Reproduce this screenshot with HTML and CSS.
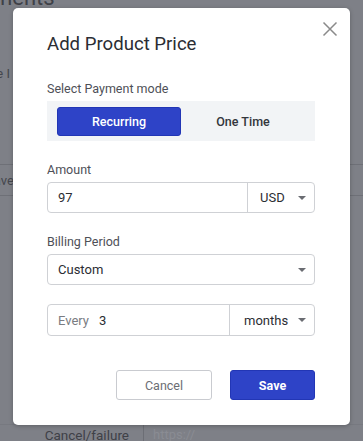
FILE: index.html
```html
<!DOCTYPE html>
<html>
<head>
<meta charset="utf-8">
<link rel="stylesheet" href="styles.css">
</head>
<body>
<div class="page">
  <div class="page-title">Payments</div>
  <div class="bg-row r1">Title I</div>
  <div class="bg-row r2">Ho</div>
  <div class="bg-row r3">Save</div>
  <div class="bg-foot">
    <span class="foot-label">Cancel/failure</span>
    <span class="foot-input">https://</span>
  </div>
</div>

<div class="modal">
  <button class="close" aria-label="Close">
    <svg width="16" height="16" viewBox="0 0 16 16"><path d="M1.5 1.5 L14.5 14.5 M14.5 1.5 L1.5 14.5" stroke="#8a8a8a" stroke-width="1.5" fill="none"/></svg>
  </button>
  <h2 class="title">Add Product Price</h2>

  <div class="label l-mode">Select Payment mode</div>
  <div class="toggle">
    <div class="opt active">Recurring</div>
    <div class="opt">One Time</div>
  </div>

  <div class="label l-amount">Amount</div>
  <div class="field-row">
    <div class="cell grow">97</div>
    <div class="cell select w-usd">USD<span class="caret"></span></div>
  </div>

  <div class="label l-billing">Billing Period</div>
  <div class="field-row">
    <div class="cell grow select">Custom<span class="caret"></span></div>
  </div>

  <div class="field-row every-row">
    <div class="cell grow every"><span class="muted">Every</span><span>3</span></div>
    <div class="cell select w-months">months<span class="caret"></span></div>
  </div>

  <div class="actions">
    <button class="btn cancel">Cancel</button>
    <button class="btn save">Save</button>
  </div>
</div>
</body>
</html>
```

FILE: styles.css
```css
* { box-sizing: border-box; }
html, body { margin: 0; padding: 0; }
body {
  width: 363px;
  height: 441px;
  overflow: hidden;
  background: #7e8087;
  font-family: Roboto, "Liberation Sans", sans-serif;
  position: relative;
}

/* dimmed page behind the modal */
.page {
  display: flow-root;
  color: #45474d;
  font-size: 13px;
  height: 441px;
  position: relative;
}
.page-title {
  font-size: 22px;
  margin-left: -43px;
  margin-top: -13px;
  line-height: 22px;
  color: #3f4147;
}
.bg-row {
  margin-left: -22px;
  width: 40px;
  line-height: 16px;
}
.r1 { margin-top: 57px; }
.r2 { margin-top: 28px; }
.r3 {
  margin-top: 38px;
  border-top: 1px solid #6e7077;
  border-bottom: 1px solid #6e7077;
  padding: 8px 0 6px;
  margin-left: 0;
  width: 363px;
  text-indent: -14px;
}
.bg-foot {
  position: absolute;
  left: 0;
  right: 0;
  top: 424px;
  height: 20px;
  display: flex;
  align-items: center;
  border-top: 1px solid #777980;
}
.foot-label {
  width: 144px;
  text-align: right;
  padding-right: 14px;
  color: #3f4147;
  font-size: 13.5px;
  border-right: 1px solid #6c6e75;
  line-height: 22px;
}
.foot-input { padding-left: 9px; color: #8a8c93; }

/* modal */
.modal {
  position: absolute;
  left: 13px;
  top: 8px;
  width: 337px;
  height: 417px;
  background: #fff;
  border-radius: 5px;
  box-shadow: 0 1px 4px rgba(0,0,0,0.25);
  padding: 0 35px 0 34px;
}
.close {
  position: absolute;
  right: 12px;
  top: 13px;
  width: 16px;
  height: 16px;
  padding: 0;
  border: 0;
  background: none;
  display: block;
}
.close svg { display: block; }
.title {
  margin: 25px 0 0;
  font-size: 18.6px;
  font-weight: 400;
  line-height: 22px;
  color: #2b2d33;
}
.label {
  font-size: 12.5px;
  line-height: 16px;
  color: #4e5057;
}
.l-mode { margin-top: 26px; }
.l-amount { margin-top: 21px; }
.l-billing { margin-top: 21px; }

.toggle {
  margin-top: 4px;
  height: 40px;
  background: #f2f4f6;
  padding: 6px 10px 5px;
  display: grid;
  grid-template-columns: 1fr 1fr;
}
.opt {
  display: flex;
  align-items: center;
  justify-content: center;
  font-size: 12.5px;
  font-weight: 500;
  color: #33363c;
  border-radius: 3px;
}
.opt.active {
  background: #2e43c7;
  color: #fff;
  border: 1px solid #2236b5;
}

.field-row {
  margin-top: 4px;
  display: flex;
  height: 31px;
  border: 1px solid #cfd1d5;
  border-radius: 4px;
}
.cell {
  display: flex;
  align-items: center;
  padding-left: 10px;
  font-size: 13px;
  color: #2b2d33;
}
.grow { flex: 1; }
.select { position: relative; }
.w-usd {
  width: 67px;
  border-left: 1px solid #cfd1d5;
  padding-left: 12px;
}
.w-months {
  width: 85px;
  border-left: 1px solid #cfd1d5;
  padding-left: 14px;
}
.caret {
  position: absolute;
  right: 8px;
  top: 50%;
  margin-top: -2px;
  width: 0;
  height: 0;
  border-left: 4px solid transparent;
  border-right: 4px solid transparent;
  border-top: 4px solid #6a6c72;
}
.every-row { margin-top: 19px; height: 32px; }
.every { gap: 10px; }
.muted { color: #7a7c82; }

.actions {
  margin-top: 34px;
  display: flex;
  justify-content: flex-end;
  gap: 18px;
}
.btn {
  height: 30px;
  border-radius: 3px;
  font-family: Roboto, "Liberation Sans", sans-serif;
  font-size: 12.5px;
  padding: 0;
}
.cancel {
  width: 96px;
  background: #fff;
  border: 1px solid #c9cbd0;
  color: #6b6d73;
}
.save {
  width: 85px;
  background: #2e43c7;
  border: 1px solid #2236b5;
  color: #fff;
  font-weight: 700;
}
```
